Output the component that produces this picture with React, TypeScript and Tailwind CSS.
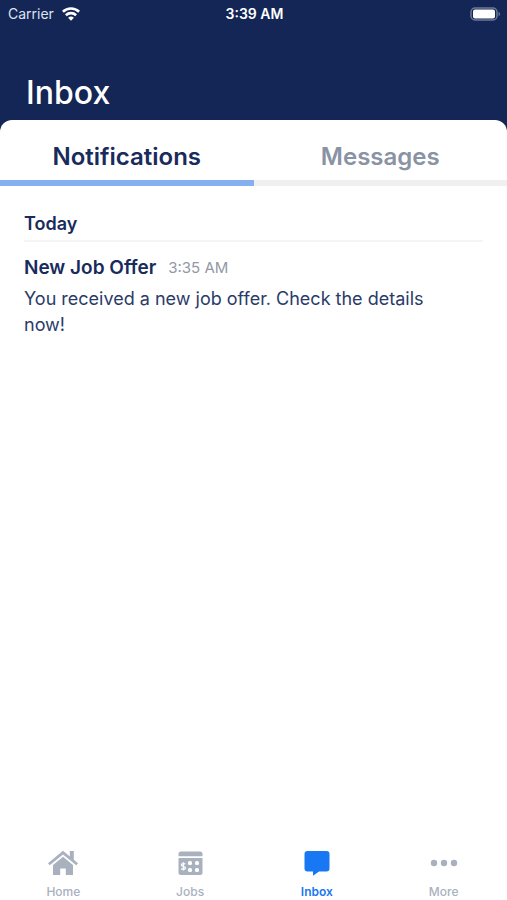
import { useState } from 'react';
import type { ReactNode } from 'react';

const tabs = [
  { id: 'notifications', label: 'Notifications' },
  { id: 'messages', label: 'Messages' },
];

const groups = [
  {
    day: 'Today',
    items: [
      {
        title: 'New Job Offer',
        time: '3:35 AM',
        body: 'You received a new job offer. Check the details now!',
      },
    ],
  },
];

const HomeIcon = () => (
  <svg width="32" height="26" viewBox="0 0 32 26" fill="currentColor" aria-hidden="true">
    <path d="M16 .8 1 13.200l1.700 2.100L16 4.500l13.300 10.800 1.700-2.100-4.200-3.500V1h-4v5.400z" />
    <path d="M16 6.800 6 14.900V25h7.200v-6.500h5.600V25H26V14.900z" />
  </svg>
);

const JobsIcon = () => (
  <svg width="25" height="26" viewBox="0 0 25 26" aria-hidden="true">
    <path fill="currentColor" d="M3 1.500h19a2.500 2.500 0 0 1 2.500 2.500v2.200H.5V4A2.500 2.500 0 0 1 3 1.500z" />
    <path fill="currentColor" d="M.5 8h24v14.500a2.500 2.500 0 0 1-2.500 2.500H3A2.500 2.500 0 0 1 .5 22.500z" />
    <g fill="white">
      <rect x="10" y="11" width="4" height="4" rx="1.500" />
      <rect x="17" y="11" width="4" height="4" rx="1.500" />
      <rect x="10" y="18" width="4" height="4" rx="1.500" />
      <rect x="17" y="18" width="4" height="4" rx="1.500" />
    </g>
    <path
      d="M7.300 14.200c-.6-.8-3.900-1-3.900.8 0 1.900 4 1 4 3 0 1.800-3.400 1.700-4.200.7M5.400 12.200v8.400"
      fill="none"
      stroke="white"
      strokeWidth="1.300"
    />
  </svg>
);

const InboxIcon = () => (
  <svg width="26" height="26" viewBox="0 0 26 26" fill="currentColor" aria-hidden="true">
    <path d="M3.500 1h19a3 3 0 0 1 3 3v14.500a3 3 0 0 1-3 3H15L9 25.800v-4.300H3.500a3 3 0 0 1-3-3V4a3 3 0 0 1 3-3z" />
  </svg>
);

const MoreIcon = () => (
  <svg width="28" height="26" viewBox="0 0 28 26" fill="currentColor" aria-hidden="true">
    <circle cx="4" cy="13" r="3.200" />
    <circle cx="14" cy="13" r="3.200" />
    <circle cx="24" cy="13" r="3.200" />
  </svg>
);

const WifiIcon = () => (
  <svg width="18" height="14" viewBox="0 0 18 14" fill="none" stroke="white" strokeWidth="2.600" aria-hidden="true">
    <path d="M.9 4.800a11.700 11.700 0 0 1 16.200 0" />
    <path d="M3.900 8.200a7.400 7.400 0 0 1 10.200 0" />
    <path d="M9 13.800 6.100 10.800a4.200 4.200 0 0 1 5.800 0z" fill="white" stroke="none" />
  </svg>
);

const BatteryIcon = () => (
  <svg width="31" height="14" viewBox="0 0 31 14" aria-hidden="true">
    <rect x="1" y="1" width="26" height="12" rx="4" fill="none" stroke="#6d7998" strokeWidth="1.500" />
    <rect x="3" y="2.500" width="22" height="9" rx="2" fill="white" />
    <path d="M28.500 5c2 .6 2 3.400 0 4z" fill="#6d7998" />
  </svg>
);

const navItems: { id: string; label: string; icon: ReactNode }[] = [
  { id: 'home', label: 'Home', icon: <HomeIcon /> },
  { id: 'jobs', label: 'Jobs', icon: <JobsIcon /> },
  { id: 'inbox', label: 'Inbox', icon: <InboxIcon /> },
  { id: 'more', label: 'More', icon: <MoreIcon /> },
];

function StatusBar() {
  return (
    <div className="grid grid-cols-3 items-center pt-1 pr-1.5 pl-2 text-sm leading-5 text-white">
      <div className="flex items-center gap-2 text-[#dfe3ee]">
        <span>Carrier</span>
        <WifiIcon />
      </div>
      <span className="text-center font-semibold">3:39 AM</span>
      <div className="flex justify-end">
        <BatteryIcon />
      </div>
    </div>
  );
}

function App() {
  const [activeTab, setActiveTab] = useState('notifications');
  const [activeNav, setActiveNav] = useState('inbox');

  return (
    <div className="flex min-h-screen flex-col bg-[#132656] font-['Inter',sans-serif]">
      <header>
        <StatusBar />
        <h1 className="px-[26px] pt-12 pb-1.5 text-[32px] leading-[42px] font-medium text-white">Inbox</h1>
      </header>

      <main className="flex-1 overflow-hidden rounded-t-xl bg-white">
        {/* Tabs */}
        <div className="grid grid-cols-2">
          {tabs.map((tab) => (
            <button
              key={tab.id}
              type="button"
              onClick={() => setActiveTab(tab.id)}
              className={
                activeTab === tab.id
                  ? 'border-b-6 border-[#85aff1] pt-5 pb-1.5 text-2xl leading-[34px] font-semibold text-[#182b5c]'
                  : 'border-b-6 border-[#f0f0f0] pt-5 pb-1.5 text-2xl leading-[34px] font-semibold text-[#8993a4]'
              }
            >
              {tab.label}
            </button>
          ))}
        </div>

        {/* Notification list */}
        {activeTab === 'notifications' &&
          groups.map((group) => (
            <section key={group.day} className="px-6 pt-6 text-[#182b5c]">
              <h2 className="border-b-2 border-[#f5f5f5] pb-0.5 text-lg leading-7 font-semibold">{group.day}</h2>
              {group.items.map((item) => (
                <article key={item.title} className="pt-3">
                  <div className="flex items-center gap-3">
                    <h3 className="text-[19px] leading-7 font-semibold">{item.title}</h3>
                    <time className="text-[15px] leading-7 text-[#9298a5]">{item.time}</time>
                  </div>
                  <p className="pt-1 pr-6 text-lg leading-[26px] text-[#2b3b69]">{item.body}</p>
                </article>
              ))}
            </section>
          ))}
      </main>

      <nav className="grid grid-cols-4 bg-white">
        {navItems.map((item) => (
          <button
            key={item.id}
            type="button"
            onClick={() => setActiveNav(item.id)}
            className={
              activeNav === item.id
                ? 'flex flex-col items-center gap-2 text-xs font-semibold text-[#1877f2]'
                : 'flex flex-col items-center gap-2 text-xs font-medium text-[#a9b1bf]'
            }
          >
            {item.icon}
            {item.label}
          </button>
        ))}
      </nav>
    </div>
  );
}

export default App;
